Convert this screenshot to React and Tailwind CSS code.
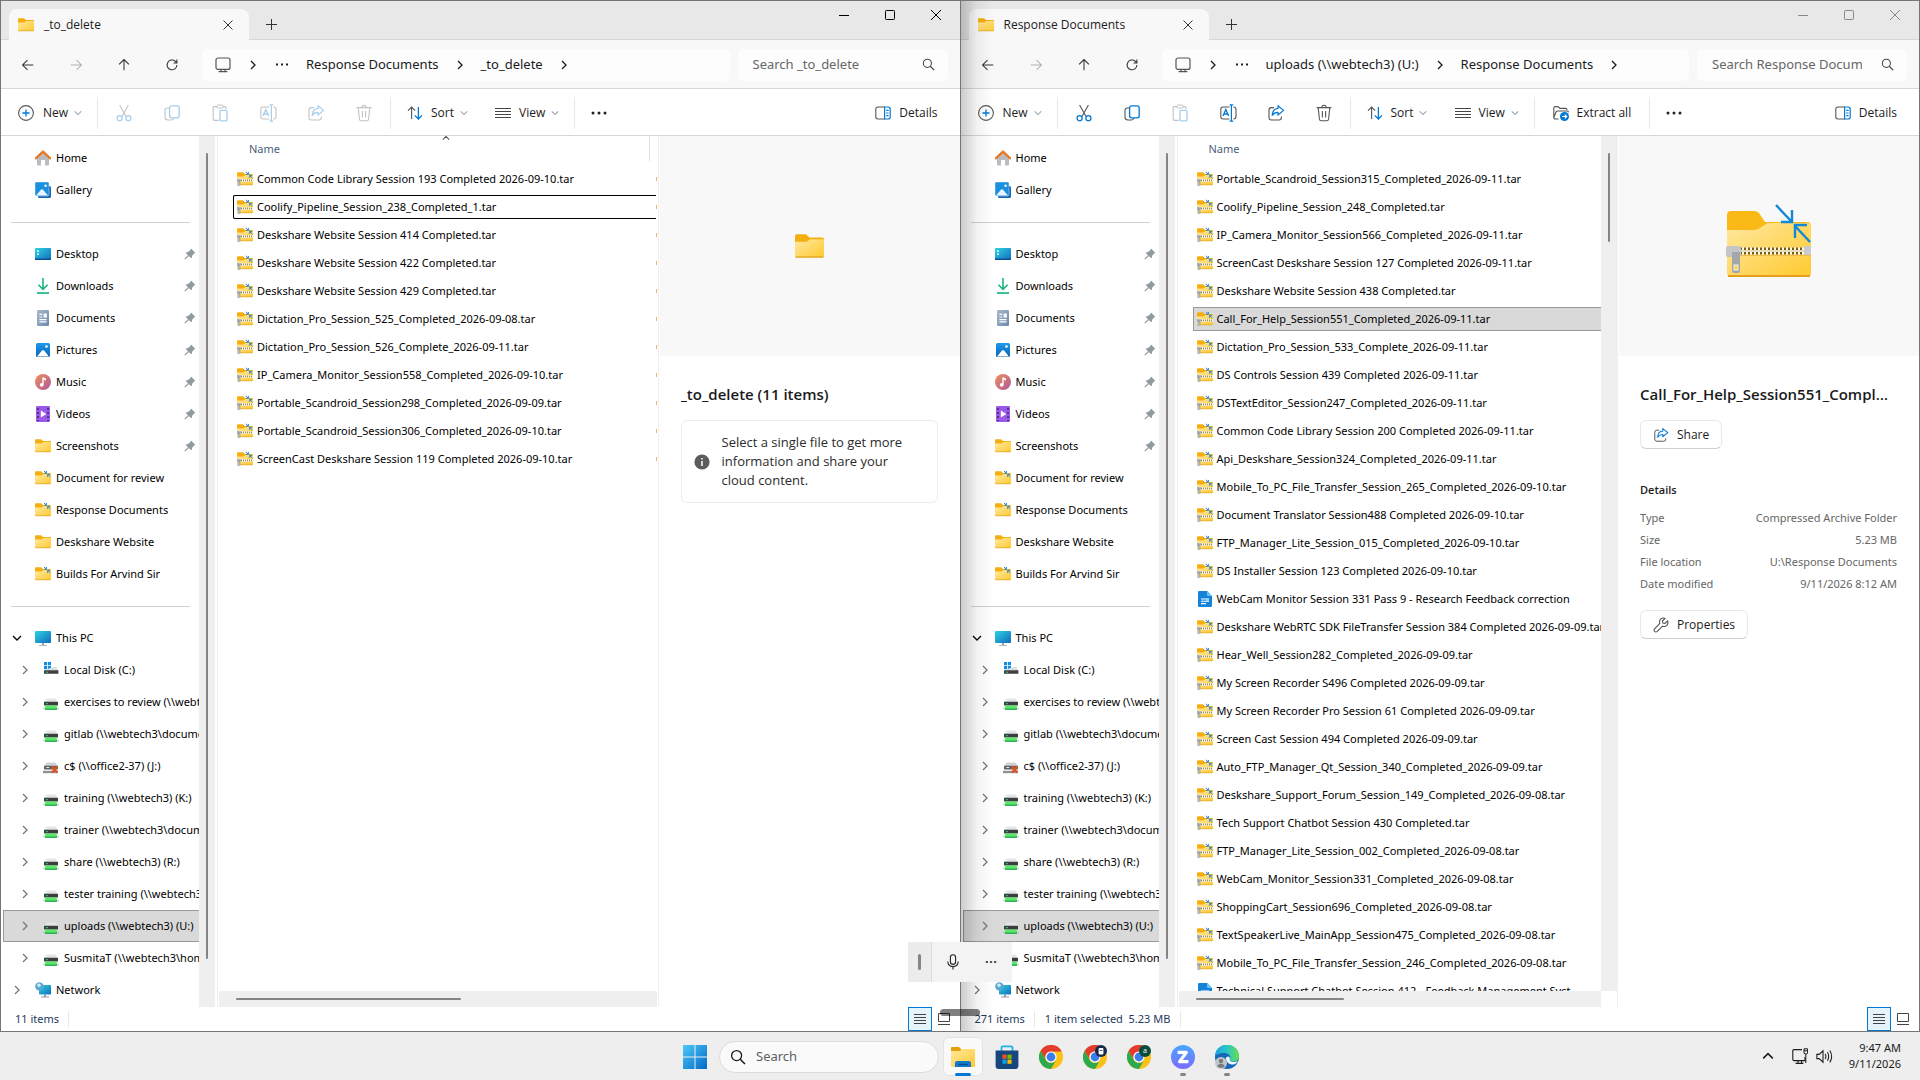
import { useState } from 'react';

const leftFiles = [
  'Common Code Library Session 193 Completed 2026-09-10.tar',
  'Coolify_Pipeline_Session_238_Completed_1.tar',
  'Deskshare Website Session 414 Completed.tar',
  'Deskshare Website Session 422 Completed.tar',
  'Deskshare Website Session 429 Completed.tar',
  'Dictation_Pro_Session_525_Completed_2026-09-08.tar',
  'Dictation_Pro_Session_526_Complete_2026-09-11.tar',
  'IP_Camera_Monitor_Session558_Completed_2026-09-10.tar',
  'Portable_Scandroid_Session298_Completed_2026-09-09.tar',
  'Portable_Scandroid_Session306_Completed_2026-09-10.tar',
  'ScreenCast Deskshare Session 119 Completed 2026-09-10.tar'
];

const rightFiles = [
  'Portable_Scandroid_Session315_Completed_2026-09-11.tar',
  'Coolify_Pipeline_Session_248_Completed.tar',
  'IP_Camera_Monitor_Session566_Completed_2026-09-11.tar',
  'ScreenCast Deskshare Session 127 Completed 2026-09-11.tar',
  'Deskshare Website Session 438 Completed.tar',
  'Call_For_Help_Session551_Completed_2026-09-11.tar',
  'Dictation_Pro_Session_533_Complete_2026-09-11.tar',
  'DS Controls Session 439 Completed 2026-09-11.tar',
  'DSTextEditor_Session247_Completed_2026-09-11.tar',
  'Common Code Library Session 200 Completed 2026-09-11.tar',
  'Api_Deskshare_Session324_Completed_2026-09-11.tar',
  'Mobile_To_PC_File_Transfer_Session_265_Completed_2026-09-10.tar',
  'Document Translator Session488 Completed 2026-09-10.tar',
  'FTP_Manager_Lite_Session_015_Completed_2026-09-10.tar',
  'DS Installer Session 123 Completed 2026-09-10.tar',
  'WebCam Monitor Session 331 Pass 9 - Research Feedback correction',
  'Deskshare WebRTC SDK FileTransfer Session 384 Completed 2026-09-09.tar',
  'Hear_Well_Session282_Completed_2026-09-09.tar',
  'My Screen Recorder S496 Completed 2026-09-09.tar',
  'My Screen Recorder Pro Session 61 Completed 2026-09-09.tar',
  'Screen Cast Session 494 Completed 2026-09-09.tar',
  'Auto_FTP_Manager_Qt_Session_340_Completed_2026-09-09.tar',
  'Deskshare_Support_Forum_Session_149_Completed_2026-09-08.tar',
  'Tech Support Chatbot Session 430 Completed.tar',
  'FTP_Manager_Lite_Session_002_Completed_2026-09-08.tar',
  'WebCam_Monitor_Session331_Completed_2026-09-08.tar',
  'ShoppingCart_Session696_Completed_2026-09-08.tar',
  'TextSpeakerLive_MainApp_Session475_Completed_2026-09-08.tar',
  'Mobile_To_PC_File_Transfer_Session_246_Completed_2026-09-08.tar',
  'Technical Support Chatbot Session 412 - Feedback Management Syst'
];

const sidebar = [
  { icon: 'home', label: 'Home' },
  { icon: 'gallery', label: 'Gallery' },
  { separator: true },
  { icon: 'desktop', label: 'Desktop', pinned: true },
  { icon: 'downloads', label: 'Downloads', pinned: true },
  { icon: 'documents', label: 'Documents', pinned: true },
  { icon: 'pictures', label: 'Pictures', pinned: true },
  { icon: 'music', label: 'Music', pinned: true },
  { icon: 'videos', label: 'Videos', pinned: true },
  { icon: 'folder', label: 'Screenshots', pinned: true },
  { icon: 'folderSync', label: 'Document for review' },
  { icon: 'folderSync', label: 'Response Documents' },
  { icon: 'folder', label: 'Deskshare Website' },
  { icon: 'folderSync', label: 'Builds For Arvind Sir' },
  { separator: true },
  { icon: 'pc', label: 'This PC', arrow: 'down' },
  { icon: 'disk', label: 'Local Disk (C:)', arrow: 'right', child: true },
  { icon: 'drive', label: 'exercises to review (\\\\webtech3) (E:)', arrow: 'right', child: true },
  { icon: 'drive', label: 'gitlab (\\\\webtech3\\documents) (G:)', arrow: 'right', child: true },
  { icon: 'driveOff', label: 'c$ (\\\\office2-37) (J:)', arrow: 'right', child: true },
  { icon: 'drive', label: 'training (\\\\webtech3) (K:)', arrow: 'right', child: true },
  { icon: 'drive', label: 'trainer (\\\\webtech3\\documents) (L:)', arrow: 'right', child: true },
  { icon: 'drive', label: 'share (\\\\webtech3) (R:)', arrow: 'right', child: true },
  { icon: 'drive', label: 'tester training (\\\\webtech3) (T:)', arrow: 'right', child: true },
  { icon: 'drive', label: 'uploads (\\\\webtech3) (U:)', arrow: 'right', child: true, selected: true },
  { icon: 'drive', label: 'SusmitaT (\\\\webtech3\\home) (Z:)', arrow: 'right', child: true },
  { icon: 'network', label: 'Network', arrow: 'right' }
];

const Svg = ({ size = 16, box = 16, className = '', children }) => (
  <svg
    width={size}
    height={size}
    viewBox={`0 0 ${box} ${box}`}
    fill="none"
    className={`shrink-0 ${className}`}
    aria-hidden="true"
  >
    {children}
  </svg>
);

const Gradients = () => (
  <defs>
    <linearGradient id="gold" x1="0" y1="0" x2="1" y2="1">
      <stop offset="0" stopColor="#ffe8a0" />
      <stop offset="1" stopColor="#ffc92e" />
    </linearGradient>
    <linearGradient id="sea" x1="0" y1="0" x2="1" y2="1">
      <stop offset="0" stopColor="#2fd3e0" />
      <stop offset="1" stopColor="#0f6cc0" />
    </linearGradient>
    <linearGradient id="sky" x1="0" y1="0" x2="0" y2="1">
      <stop offset="0" stopColor="#1f9ae8" />
      <stop offset="1" stopColor="#0a62b8" />
    </linearGradient>
    <linearGradient id="peach" x1="0" y1="0" x2="1" y2="1">
      <stop offset="0" stopColor="#f0905a" />
      <stop offset="1" stopColor="#b0589c" />
    </linearGradient>
    <linearGradient id="steel" x1="0" y1="0" x2="1" y2="1">
      <stop offset="0" stopColor="#a9bacd" />
      <stop offset="1" stopColor="#6b87a8" />
    </linearGradient>
  </defs>
);

const FolderShape = () => (
  <>
    <path d="M0 2.2Q0 1.2 1 1.2H6L8 3H15Q16 3 16 4V8H0Z" fill="#f5ae10" />
    <path d="M0 5.4H6.4L8.4 4H15.2Q16 4 16 4.8V13.3Q16 14.1 15.2 14.1H.8Q0 14.1 0 13.3Z" fill="url(#gold)" />
    <path d="M.3 13.8H15.7" stroke="#e0a21c" strokeWidth="0.7" />
  </>
);

const SyncMark = () => (
  <path
    d="M8.8 .8 11.2 3M9 3.3H11.4V1M15.4 7 12.8 4.6M12.6 6.8V4.4H15"
    stroke="#2789d0"
    strokeWidth="1"
  />
);

const FolderIcon = ({ size = 16 }) => (
  <Svg size={size}>
    <Gradients />
    <FolderShape />
  </Svg>
);

const ZipIcon = () => (
  <Svg>
    <Gradients />
    <FolderShape />
    <path d="M1 9.4H16" stroke="#fff6d8" strokeWidth="2.6" />
    <path d="M4 9.4H16" stroke="#8f8875" strokeWidth="1.6" strokeDasharray="1 1" />
    <path d="M0 8.2H3.8V10.4H3.4V14.8H.9V10.4H0Z" fill="#a2a5ab" />
    <path d="M1.7 12.4H2.5V13.6H1.7Z" fill="#fff" />
    <SyncMark />
  </Svg>
);

const DocIcon = () => (
  <Svg>
    <path d="M1 1.2Q1 0 2.2 0H10L15 5V14.8Q15 16 13.8 16H2.2Q1 16 1 14.8Z" fill="#1583d8" />
    <path d="M10 0 15 5H11.2Q10 5 10 3.8Z" fill="#69c4f5" />
    <path d="M4 8H12M4 10.3H12M4 12.6H9" stroke="#fff" strokeWidth="1.1" />
    <path d="M9 7.4H12V10H9Z" fill="#8fd4fa" />
  </Svg>
);

const sideIcons = {
  home: (
    <>
      <path d="M2 7.5 8 2 14 7.5V14.6Q14 15.4 13.2 15.4H10V10H6V15.4H2.8Q2 15.4 2 14.6Z" fill="#b9bcc0" />
      <path d="M.8 8.4 8 1.6 15.2 8.4" stroke="#e87722" strokeWidth="2.2" strokeLinecap="round" strokeLinejoin="round" />
    </>
  ),
  gallery: (
    <>
      <path d="M3 4H14.5Q16 4 16 5.5V14.5Q16 16 14.5 16H4Q3 16 3 15Z" fill="#1668b5" />
      <rect x="0" y="0" width="14" height="14" rx="1.4" fill="#1b90e0" stroke="#fff" strokeWidth="0.4" />
      <path d="M1 13.6 6.2 7.6Q7 6.8 7.8 7.6L13 13.6Z" fill="#eaf6ff" />
      <circle cx="10.6" cy="3.8" r="1.2" fill="#fff" />
    </>
  ),
  desktop: (
    <>
      <rect x="0" y="2" width="16" height="12" rx="1" fill="url(#sea)" />
      <path d="M2 4.4H4V6H2ZM2 7.4H4V9H2Z" fill="#e8fbff" />
      <path d="M0 12.6H16V13.4Q16 14 15.4 14H.6Q0 14 0 13.4Z" fill="#0d4f94" />
    </>
  ),
  downloads: (
    <>
      <path d="M8 0V11M3.4 6.8 8 11.4 12.6 6.8" stroke="#1fb185" strokeWidth="1.6" />
      <path d="M2 15H14" stroke="#28b98e" strokeWidth="1.8" />
    </>
  ),
  documents: (
    <>
      <rect x="2" y="0" width="12" height="16" rx="1.2" fill="url(#steel)" />
      <path d="M4.4 4.4H7.4M4.4 7H7.4M4.4 9.6H11.6M4.4 11.8H11.6" stroke="#fff" strokeWidth="1.2" />
      <path d="M8.6 3.6H11.8V7.6H8.6Z" fill="#fff" />
    </>
  ),
  pictures: (
    <>
      <rect x="1" y="1" width="14" height="14" rx="1.5" fill="url(#sky)" />
      <path d="M2 14.5 7 8.6Q8 7.6 9 8.6L14 14.5Z" fill="#fff" />
      <circle cx="11.5" cy="4.5" r="1.3" fill="#fff" />
    </>
  ),
  music: (
    <>
      <circle cx="8" cy="8" r="8" fill="url(#peach)" />
      <path d="M8 3.4V10.6" stroke="#fff" strokeWidth="1.4" />
      <path d="M8 3.2 11 4.6V6.4L8 5.4Z" fill="#fff" />
      <circle cx="6.7" cy="10.8" r="1.9" fill="#fff" />
    </>
  ),
  videos: (
    <>
      <rect x="1" y="0" width="14" height="16" rx="1.2" fill="#9b57e6" />
      <path d="M3 2V15M13 2V15" stroke="#4d2285" strokeWidth="1.6" strokeDasharray="2 2" />
      <path d="M5.8 4.6 11.4 8 5.8 11.4Z" fill="#fff" />
    </>
  ),
  folder: <FolderShape />,
  folderSync: (
    <>
      <FolderShape />
      <SyncMark />
    </>
  ),
  pc: (
    <>
      <rect x="0" y="1" width="16" height="12" rx="1" fill="url(#sea)" />
      <path d="M7 13H9V15H12V15.8H4V15H7Z" fill="#9aa7b2" />
    </>
  ),
  disk: (
    <>
      <path d="M1 0H4V3.2H1ZM4.8 0H8V3.2H4.8ZM1 4H4V7.2H1ZM4.8 4H8V7.2H4.8Z" fill="#0f8be0" />
      <path d="M9 5H13.6L15.4 8.4H2Z" fill="#dcdee0" />
      <rect x="1" y="8.2" width="14.4" height="3.6" rx="0.6" fill="#3c4043" />
      <rect x="3.4" y="9.6" width="1.4" height="1.2" fill="#4be07a" />
    </>
  ),
  drive: (
    <>
      <path d="M4 4.4H12L15 8H1Z" fill="#e2e4e6" />
      <rect x="1" y="7.8" width="14" height="3.6" rx="0.6" fill="#3a3d40" />
      <rect x="3.2" y="9" width="1.4" height="1.2" fill="#4be07a" />
      <path d="M0 14.6H16" stroke="#a6b0a8" strokeWidth="0.8" />
      <rect x="2" y="11.6" width="12" height="3.8" fill="#55ea68" />
      <rect x="2" y="14.6" width="12" height="1.2" fill="#1f9c46" />
    </>
  ),
  driveOff: (
    <>
      <path d="M4 4.4H12L15 8H1Z" fill="#cfd1d3" />
      <rect x="1" y="7.8" width="14" height="3.6" rx="0.6" fill="#606468" />
      <rect x="3.2" y="9" width="3" height="1" fill="#e6e6e6" />
      <path d="M0 14H15" stroke="#8f9396" strokeWidth="2.4" />
      <path d="M9 8.6 14.2 14.4M14.2 8.6 9 14.4" stroke="#e0531f" strokeWidth="2.2" />
    </>
  ),
  network: (
    <>
      <rect x="4" y="3" width="12" height="9.6" rx="0.8" fill="url(#sea)" />
      <path d="M9 12.6H11V14.6H14V15.6H6V14.6H9Z" fill="#8d9aa5" />
      <circle cx="4.4" cy="4.4" r="4.2" fill="#5aa6d2" />
      <path d="M2 2.4Q4 .8 5.6 2.4T3 5.2Z" fill="#cde9f7" />
    </>
  )
};

const Chevron = ({ dir = 'right', className = '', size = 8 }) => {
  const paths = {
    right: 'M3 1 7 5 3 9',
    down: 'M1 3 5 7 9 3',
    up: 'M1 7 5 3 9 7'
  };
  return (
    <Svg size={size} box={10} className={className}>
      <path d={paths[dir]} stroke="currentColor" strokeWidth="1.3" />
    </Svg>
  );
};

const Dots = () => (
  <Svg>
    <circle cx="2" cy="8" r="1.5" fill="#222" />
    <circle cx="8" cy="8" r="1.5" fill="#222" />
    <circle cx="14" cy="8" r="1.5" fill="#222" />
  </Svg>
);

const SearchIcon = ({ size = 13 }) => (
  <Svg size={size}>
    <circle cx="6.6" cy="6.6" r="5" stroke="currentColor" strokeWidth="1.3" />
    <path d="M10.2 10.2 15 15" stroke="currentColor" strokeWidth="1.5" />
  </Svg>
);

const toolIcons = {
  Cut: (
    <>
      <path d="M4.6 1 11 12.4M13.4 1 7 12.4" stroke="#555" strokeWidth="1.1" />
      <circle cx="4.6" cy="14.2" r="2.5" stroke="#0078d4" strokeWidth="1.3" />
      <circle cx="13.4" cy="14.2" r="2.5" stroke="#0078d4" strokeWidth="1.3" />
    </>
  ),
  Copy: (
    <>
      <path d="M6 4H4.4Q2 4 2 6.4V13Q2 16 5 16H8.6Q10.6 16 10.8 14" stroke="#555" strokeWidth="1.1" />
      <rect x="6.6" y="1.8" width="9.6" height="12" rx="2" stroke="#0078d4" strokeWidth="1.3" />
    </>
  ),
  Paste: (
    <>
      <path d="M6 2.6H3.4Q2.2 2.6 2.2 3.8V15Q2.2 16.4 3.4 16.4H8M12 2.6H14Q15 2.6 15 4V5" stroke="#555" strokeWidth="1.1" />
      <rect x="6" y="1" width="6" height="3" rx="1.2" stroke="#555" strokeWidth="1" />
      <rect x="9" y="6.4" width="7" height="10.4" rx="1.2" stroke="#0078d4" strokeWidth="1.3" />
    </>
  ),
  Rename: (
    <>
      <path d="M10.4 3H4Q1.8 3 1.8 5.2V12.8Q1.8 15 4 15H10.4M14.4 3Q17 3 17 5.4V12.6Q17 15 14.4 15" stroke="#555" strokeWidth="1.1" />
      <path d="M12.4 1.2V16.8M10.6 .8H14.2M10.6 17.2H14.2" stroke="#0078d4" strokeWidth="1.2" />
      <path d="M4 12 6.8 5.4 9.6 12M5 10H8.6" stroke="#0078d4" strokeWidth="1.3" />
    </>
  ),
  Share: (
    <>
      <path d="M7 3.6H4.4Q2 3.6 2 6V13.6Q2 16 4.4 16H12Q14.4 16 14.4 13.6V12.6" stroke="#555" strokeWidth="1.1" />
      <path d="M11 1.8 16.6 6.4 11 11V8.4Q7.4 8.2 5.2 11.4 5.6 4.8 11 4.4Z" stroke="#0078d4" strokeWidth="1.2" strokeLinejoin="round" />
    </>
  ),
  Delete: (
    <path
      d="M1.6 3.6H16.4M6.8 3.4Q6.8 1.2 9 1.2T11.2 3.4M3.2 3.8 4.4 15Q4.6 16.8 6.2 16.8H11.8Q13.4 16.8 13.6 15L14.8 3.8M7.4 7V13.4M10.6 7V13.4"
      stroke="#555"
      strokeWidth="1.1"
    />
  )
};

const ShareIcon = () => <Svg box={18}>{toolIcons.Share}</Svg>;

const Divider = () => <span className="h-8 w-px shrink-0 bg-[#e8e8e8]" />;

const DropLabel = ({ icon, label, className }) => (
  <button className={`flex h-8 items-center text-[#1b1b1b] ${className}`}>
    {icon}
    <span className="ml-2">{label}</span>
    <Chevron dir="down" className="ml-1.5 text-gray-400" />
  </button>
);

const Toolbar = ({ enabled, extract }) => (
  <div className="flex h-[47px] shrink-0 items-center border-b border-[#d6d6d6] bg-white pt-0.5 font-['Open_Sans',sans-serif] text-[12px]">
    <DropLabel
      className="ml-4 w-20"
      label="New"
      icon={
        <Svg size={18} box={18}>
          <circle cx="9" cy="9" r="7.4" stroke="#555" strokeWidth="1.1" />
          <path d="M9 5.4V12.6M5.4 9H12.6" stroke="#0078d4" strokeWidth="1.3" />
        </Svg>
      }
    />
    <Divider />
    <div className="ml-0.5 flex">
      {Object.keys(toolIcons).map((name) => (
        <button
          key={name}
          aria-label={name}
          disabled={!enabled.includes(name)}
          className="flex h-8 w-12 items-center justify-center disabled:opacity-35"
        >
          <Svg size={18} box={18}>{toolIcons[name]}</Svg>
        </button>
      ))}
    </div>
    <span className="w-0.5" />
    <Divider />
    <DropLabel
      className="ml-4 w-[88px]"
      label="Sort"
      icon={
        <Svg>
          <path d="M4.6 14V2M1 5.6 4.6 2 8.2 5.6" stroke="#555" strokeWidth="1.1" />
          <path d="M11.4 2V14M7.8 10.4 11.4 14 15 10.4" stroke="#0078d4" strokeWidth="1.3" />
        </Svg>
      }
    />
    <DropLabel
      className="w-[79px]"
      label="View"
      icon={
        <Svg>
          <path d="M0 3.5H16M0 6.5H16M0 9.5H16M0 12.5H16" stroke="#444" strokeWidth="1" />
        </Svg>
      }
    />
    <Divider />
    {extract && (
      <>
        <button className="mx-4.5 flex h-8 items-center gap-2 text-[#1b1b1b]">
          <Svg>
            <path d="M5.6 14H2.4Q.8 14 .8 12.4V3Q.8 1.6 2.4 1.6H5L7 3.4H12.6Q14 3.4 14 5M.8 12.6 3 7Q3.4 6 4.6 6H14.2Q15.6 6 15.2 7.4" stroke="#555" strokeWidth="1.1" />
            <circle cx="11.5" cy="11.5" r="4.5" fill="#0078d4" />
            <path d="M9 11.5H13.6M11.8 9.6 13.8 11.5 11.8 13.4" stroke="#fff" strokeWidth="1.1" />
          </Svg>
          Extract all
        </button>
        <Divider />
      </>
    )}
    <button aria-label="See more" className="ml-4 flex h-8 items-center">
      <Dots />
    </button>
    <button className="mr-[22px] ml-auto flex h-8 items-center gap-2 text-[#1b1b1b]">
      <Svg>
        <path d="M9.6 2H3Q.8 2 .8 4.2V11.8Q.8 14 3 14H9.6" stroke="#555" strokeWidth="1.1" />
        <path d="M9.6 2H13Q15.2 2 15.2 4.2V11.8Q15.2 14 13 14H9.6ZM11.2 5.4H13.6M11.2 8H13.6M11.2 10.6H13.6" stroke="#0078d4" strokeWidth="1.2" />
      </Svg>
      Details
    </button>
  </div>
);

const TitleBar = ({ title, active }) => (
  <div className="flex h-[39px] shrink-0 border-b border-[#d6d6d6] bg-[#e8e8e8]">
    <div className="mt-2 -mb-px ml-2 flex w-60 items-center rounded-t-lg bg-[#f8f8f8] pr-3.5 pl-[9px]">
      <FolderIcon />
      <span className="ml-2.5 font-['Open_Sans',sans-serif] text-[12px] font-medium text-[#1b1b1b]">{title}</span>
      <button aria-label="Close tab" className="ml-auto">
        <Svg size={14} box={14}>
          <path d="M2.5 2.5 11.5 11.5M11.5 2.5 2.5 11.5" stroke="#333" strokeWidth="1" />
        </Svg>
      </button>
    </div>
    <button aria-label="New tab" className="mt-2 flex w-11 items-center justify-center">
      <Svg size={12} box={12}>
        <path d="M6.5 1V12M1 6.5H12" stroke="#333" strokeWidth="1" />
      </Svg>
    </button>
    <div className={`mr-px ml-auto flex h-7 ${active ? 'text-black' : 'text-[#888]'}`}>
      <button aria-label="Minimize" className="flex w-[46px] items-center justify-center">
        <Svg size={10} box={10}>
          <path d="M0 5.5H10" stroke="currentColor" />
        </Svg>
      </button>
      <button aria-label="Maximize" className="flex w-[46px] items-center justify-center">
        <Svg size={10} box={10}>
          <rect x="0.5" y="0.5" width="9" height="9" rx="0.8" stroke="currentColor" />
        </Svg>
      </button>
      <button aria-label="Close" className="flex w-[46px] items-center justify-center">
        <Svg size={10} box={10}>
          <path d="M0 0 10 10M10 0 0 10" stroke="currentColor" />
        </Svg>
      </button>
    </div>
  </div>
);

const navIcons = [
  { name: 'Back', d: 'M14 8H2M7.4 2.4 1.8 8 7.4 13.6' },
  { name: 'Forward', d: 'M2 8H14M8.6 2.4 14.2 8 8.6 13.6', disabled: true },
  { name: 'Up', d: 'M8 14V2M2.4 7.4 8 1.8 13.6 7.4' },
  { name: 'Refresh', d: 'M13.6 8A5.6 5.6 0 1 1 11.6 3.6L13.4 5.4M13.6 1.8V5.6H9.8' }
];

const AddressBar = ({ crumbs, search, id }) => (
  <div className="flex h-[49px] shrink-0 items-center border-b border-[#d6d6d6] bg-[#f8f8f8] pt-px pr-3 pl-[3px] text-[13px]">
    {navIcons.map(({ name, d, disabled }) => (
      <button
        key={name}
        aria-label={name}
        disabled={disabled}
        className="flex h-8 w-12 items-center justify-center text-[#333] disabled:text-[#b0b0b0]"
      >
        <Svg size={14}>
          <path d={d} stroke="currentColor" strokeWidth="1.2" />
        </Svg>
      </button>
    ))}
    <div className="ml-1.5 flex h-8 min-w-0 flex-1 items-center rounded-md bg-[#fdfdfd] pl-[13px] text-[#1b1b1b]">
      <Svg>
        <rect x="1" y="1" width="14" height="11.4" rx="2" stroke="#555" strokeWidth="1.2" />
        <path d="M3.6 14.6H12.4M6 12.4V14.6M10 12.4V14.6" stroke="#555" strokeWidth="1.2" />
      </Svg>
      <Chevron size={10} className="mr-4 ml-[17px]" />
      <Svg className="mr-4">
        <path d="M2 7.5H4M7 7.5H9M12 7.5H14" stroke="#222" strokeWidth="1.8" />
      </Svg>
      {crumbs.map((crumb) => (
        <span key={crumb} className="flex items-center whitespace-nowrap">
          <a href="#">{crumb}</a>
          <Chevron size={10} className="mx-4" />
        </span>
      ))}
    </div>
    <div className="ml-2 flex h-8 w-[210px] items-center rounded-md bg-[#fdfdfd] pr-[13px] pl-[15px] text-[#444]">
      <input
        id={id}
        type="text"
        aria-label={search}
        placeholder={search}
        className="mr-auto w-[150px] outline-none placeholder:text-[#666]"
      />
      <SearchIcon />
    </div>
  </div>
);

const Sidebar = () => (
  <nav className="flex min-h-0 shrink-0">
    <ul className="w-[198px] overflow-hidden pt-1.5 text-[11px] text-black">
      {sidebar.map((item, i) =>
        item.separator ? (
          <li key={i} className="flex h-8 items-center pr-[9px] pl-2.5">
            <hr className="w-full border-[#d0d0d0]" />
          </li>
        ) : (
          <li key={i} className="pl-0.5">
            <button
              className={`flex h-8 w-full items-center border border-r-0 ${item.child ? 'pl-2' : ''} ${
                item.selected ? 'border-[#999] bg-[#d9d9d9]' : 'border-transparent'
              }`}
            >
              <span className="flex w-[26px] shrink-0 justify-center">
                {item.arrow && (
                  <Chevron
                    dir={item.arrow}
                    size={10}
                    className={item.arrow === 'down' ? 'text-black' : 'text-[#777]'}
                  />
                )}
              </span>
              <span className="ml-[5px] shrink-0">
                <Svg>
                  <Gradients />
                  {sideIcons[item.icon]}
                </Svg>
              </span>
              <span className="ml-[5px] whitespace-nowrap">{item.label}</span>
              {item.pinned && (
                <Svg size={12} box={12} className="mr-[3px] ml-auto">
                  <path d="M7 .6 11.4 5 10 5.6 8 8 7.8 10 6.2 9.6 2.4 5.8 2 4.2 4 4 6.4 2Z" fill="#8f9ba3" />
                  <path d="M.8 11.2 4.4 7.6" stroke="#8f9ba3" strokeWidth="1.2" />
                </Svg>
              )}
            </button>
          </li>
        )
      )}
    </ul>
    <div className="flex w-4 justify-center bg-[#efefef] pt-[17px] pb-12">
      <span className="w-0.5 rounded-full bg-[#858585]" />
    </div>
  </nav>
);

const FileTable = ({ files, picked, onPick, pickedStyle, nextColumn, sorted }) => (
  <div className="relative min-w-0 flex-1 overflow-hidden">
    {sorted && <Chevron dir="up" className="absolute -top-0.5 left-1/2 ml-1 text-[#555]" />}
    <table className="w-full table-fixed border-collapse text-[11px]">
      <thead>
        <tr className="h-[29px]">
          <th className="p-0 text-left align-top font-normal">
            <div className={`h-[25px] border-[#e2e2e2] pt-[5px] pl-[30px] text-[#4c607a] ${nextColumn ? 'mr-1.5 border-r' : ''}`}>
              Name
            </div>
          </th>
          {nextColumn && <th className="w-px p-0" aria-label="Status" />}
        </tr>
      </thead>
      <tbody>
        {files.map((file, i) => (
          <tr key={file} className="h-7" onClick={() => onPick(i)}>
            <td className="p-0 pl-3.5">
              <div
                className={`flex h-6 items-center gap-1 border border-r-0 pl-[3px] whitespace-nowrap text-black ${
                  i === picked ? pickedStyle : 'border-transparent'
                }`}
              >
                {file.endsWith('.tar') ? <ZipIcon /> : <DocIcon />}
                <span>{file}</span>
              </div>
            </td>
            {nextColumn && (
              <td className="p-0">
                <div className="h-1 w-px bg-[#e8b96a]" />
              </td>
            )}
          </tr>
        ))}
      </tbody>
    </table>
  </div>
);

const HScroll = ({ wide }) => (
  <div className="flex h-4 shrink-0 items-center bg-[#efefef] pl-[17px]">
    <span className={`h-0.5 rounded-full bg-[#858585] ${wide ? 'w-[225px]' : 'w-[148px]'}`} />
  </div>
);

const StatusBar = ({ texts }) => (
  <div className="flex h-6 shrink-0 items-center bg-white text-[11px] text-[#1e395b]">
    {texts.map((text, i) => (
      <span
        key={text}
        className={`border-r border-[#e8e8e8] whitespace-pre ${i === 0 ? 'pr-[9px] pl-3.5' : 'px-2.5'}`}
      >
        {text}
      </span>
    ))}
    <div className="ml-auto flex h-full items-center">
      <button
        aria-label="Details view"
        className="flex h-6 w-6 items-center justify-center border border-[#0078d4] bg-[#e5f3fb]"
      >
        <Svg size={12} box={12}>
          <path d="M0 1.5H12M0 4.5H12M0 7.5H12M0 10.5H12" stroke="#444" />
        </Svg>
      </button>
      <button aria-label="Large icons" className="mr-2.5 ml-1.5">
        <Svg size={12} box={12}>
          <path d="M.5 .5H11.5V8.5H.5ZM0 11.5H12" stroke="#444" />
        </Svg>
      </button>
    </div>
  </div>
);

const BigZipIcon = () => (
  <svg width="86" height="76" viewBox="0 0 86 76" fill="none" className="mb-2" aria-hidden="true">
    <Gradients />
    <path d="M1 11Q1 7 5 7H28Q31 7 33 9L39 18H81Q85 18 85 22V40H1Z" fill="#fbb917" />
    <path d="M1 26H28Q31 26 34 24L40 20Q41 19 43 19H81Q85 19 85 23V69Q85 73 81 73H5Q1 73 1 69Z" fill="url(#gold)" />
    <path d="M2 72H84" stroke="#e59f1b" strokeWidth="2" />
    <path d="M1 51H85V52H1Z" fill="#f0bd45" />
    <path d="M8 47H80" stroke="#fff8e0" strokeWidth="7" />
    <path d="M14 47H80" stroke="#7a5a12" strokeWidth="7" strokeDasharray="2 2" />
    <path d="M14 47H80" stroke="#e8dcc0" strokeWidth="2" />
    <rect x="78" y="42" width="7" height="9" rx="1" fill="#c9cbce" />
    <path d="M0 44Q0 42 2 42H12Q15 42 15 45V51Q15 53 13 53H2Q0 53 0 51Z" fill="#c3c5c8" />
    <path d="M6 48H14V67Q14 69 12 69H8Q6 69 6 67Z" fill="#a3a6aa" />
    <rect x="8" y="61" width="4" height="5" fill="#ffd24a" stroke="#eee" />
    <path d="M50 1 65 17M55 18H66V6" stroke="#1288d8" strokeWidth="2.4" />
    <path d="M84 38 69 22M69 34V21H81" stroke="#1288d8" strokeWidth="2.4" />
  </svg>
);

const details = [
  ['Type', 'Compressed Archive Folder'],
  ['Size', '5.23 MB'],
  ['File location', 'U:\\Response Documents'],
  ['Date modified', '9/11/2026 8:12 AM']
];

const DetailsPane = ({ title, preview, children }) => (
  <aside className="w-[302px] shrink-0 border-l border-[#f0f0f0] bg-white pl-px">
    <div className="flex h-[220px] items-center justify-center bg-[#f8f8f8]">{preview}</div>
    <div className="pt-[27px] pr-[22px] pl-[21px] font-['Open_Sans',sans-serif]">
      <h2 className="mr-2 truncate text-[15px] leading-[22px] font-semibold text-[#1b1b1b]">{title}</h2>
      {children}
    </div>
  </aside>
);

const FolderInfo = () => (
  <div className="mt-[15px] flex items-center rounded-md border border-[#ececec] py-3 pr-4 pl-3">
    <Svg>
      <circle cx="8" cy="8" r="7.6" fill="#5c5c5c" />
      <path d="M8 7V12M8 4V5.6" stroke="#fff" strokeWidth="1.5" />
    </Svg>
    <p className="ml-3 text-[13px] leading-[19px] text-[#2b2b2b]">
      Select a single file to get more information and share your cloud content.
    </p>
  </div>
);

const paneButton =
  'flex h-[29px] items-center gap-2 rounded-md border border-[#e8e8e8] border-b-[#d0d0d0] bg-white px-3 text-[12px] text-[#1b1b1b]';

const FileInfo = () => (
  <>
    <button className={`mt-[15px] ${paneButton}`}>
      <ShareIcon />
      Share
    </button>
    <h3 className="mt-8 text-[11px] leading-[18px] font-semibold text-[#1b1b1b]">Details</h3>
    <dl className="mt-2 font-['Noto_Sans',sans-serif] text-[11px] leading-[22px] text-[#666]">
      {details.map(([name, value]) => (
        <div key={name} className="flex justify-between">
          <dt>{name}</dt>
          <dd>{value}</dd>
        </div>
      ))}
    </dl>
    <button className={`mt-[15px] ${paneButton}`}>
      <Svg>
        <path
          d="M14.6 4 12 6.4 9.8 6 9.4 4 12 1.4Q9.6 .4 7.6 2.2 6 4 6.8 6.4L1.4 12Q.6 13.2 1.6 14.4 2.8 15.4 4 14.6L9.6 9.2Q12 10 13.8 8.4 15.6 6.4 14.6 4Z"
          stroke="#555"
          strokeWidth="1.1"
        />
      </Svg>
      Properties
    </button>
  </>
);

const LeftWindow = () => {
  const [picked, setPicked] = useState(1);
  return (
    <section className="flex min-w-0 flex-1 flex-col border-y border-l border-[#767676] bg-white">
      <TitleBar title="_to_delete" active />
      <AddressBar id="search-left" crumbs={['Response Documents', '_to_delete']} search="Search _to_delete" />
      <Toolbar enabled={[]} />
      <div className="flex min-h-0 flex-1">
        <Sidebar />
        <main className="ml-0.5 flex min-w-0 flex-1 flex-col border-l border-[#f0f0f0] px-px">
          <FileTable
            files={leftFiles}
            picked={picked}
            onPick={setPicked}
            pickedStyle="border-black rounded-l-xs"
            nextColumn
            sorted
          />
          <HScroll wide />
        </main>
        <DetailsPane title="_to_delete (11 items)" preview={<FolderIcon size={29} />}>
          <FolderInfo />
        </DetailsPane>
      </div>
      <StatusBar texts={['11 items']} />
    </section>
  );
};

const RightWindow = () => {
  const [picked, setPicked] = useState(5);
  return (
    <section className="relative flex min-w-0 flex-1 flex-col border border-[#767676] bg-white">
      <TitleBar title="Response Documents" />
      <AddressBar
        id="search-right"
        crumbs={['uploads (\\\\webtech3) (U:)', 'Response Documents']}
        search="Search Response Documents"
      />
      <Toolbar enabled={['Cut', 'Copy', 'Rename', 'Share', 'Delete']} extract />
      <div className="flex min-h-0 flex-1">
        <Sidebar />
        <main className="ml-0.5 flex min-w-0 flex-1 flex-col border-l border-[#f0f0f0] pl-px">
          <div className="flex min-h-0 flex-1">
            <FileTable
              files={rightFiles}
              picked={picked}
              onPick={setPicked}
              pickedStyle="border-[#999] bg-[#d9d9d9]"
            />
            <div className="flex w-4 justify-center bg-[#efefef] pt-[17px]">
              <span className="h-[89px] w-0.5 rounded-full bg-[#858585]" />
            </div>
          </div>
          <div className="pr-4">
            <HScroll />
          </div>
        </main>
        <DetailsPane title="Call_For_Help_Session551_Completed_2026-09-11.tar" preview={<BigZipIcon />}>
          <FileInfo />
        </DetailsPane>
      </div>
      <StatusBar texts={['271 items', '1 item selected  5.23 MB']} />
      {/* shadow cast by the focused window */}
      <div className="pointer-events-none absolute inset-y-0 left-0 w-8 bg-linear-to-r from-black/20 via-black/5 to-transparent" />
    </section>
  );
};

const ChromeIcon = ({ children }) => (
  <Svg size={24} box={24}>
    <circle cx="12" cy="12" r="12" fill="#fbc116" />
    <path d="M12 6.5H22.7A12 12 0 0 0 1.6 6L6.8 15A6 6 0 0 1 12 6.5Z" fill="#e33b2e" />
    <path d="M1.6 6A12 12 0 0 0 12 24L17.2 15A6 6 0 0 1 6.8 15Z" fill="#2da94f" />
    <circle cx="12" cy="12" r="5.6" fill="#fff" />
    <circle cx="12" cy="12" r="4.4" fill="#3b7ded" />
    {children}
  </Svg>
);

const taskIcons = [
  {
    name: 'File Explorer',
    active: true,
    icon: (
      <Svg size={24} box={24}>
        <Gradients />
        <path d="M0 3Q0 2 1 2H8L10 4V8H0Z" fill="#e3a008" />
        <path d="M0 6H9L11 4H23Q24 4 24 5V21Q24 22 23 22H1Q0 22 0 21Z" fill="url(#gold)" />
        <path d="M4 22V18Q4 16 6 16H18Q20 16 20 18V22Z" fill="#1178cc" />
        <path d="M7 19.5H17" stroke="#0b4f92" strokeWidth="1.4" />
      </Svg>
    )
  },
  {
    name: 'Microsoft Store',
    icon: (
      <Svg size={24} box={24}>
        <path d="M6.5 6V2.6Q6.5 1.4 7.8 1.4H16.2Q17.5 1.4 17.5 2.6V6" stroke="#20b2ee" strokeWidth="1.8" />
        <path d="M.6 5.4H23.4V21Q23.4 24 20.4 24H3.6Q.6 24 .6 21Z" fill="#17457e" />
        <path d="M7.4 9.6H11.6V13.8H7.4Z" fill="#f25022" />
        <path d="M12.4 9.6H16.6V13.8H12.4Z" fill="#7fba00" />
        <path d="M7.4 14.6H11.6V18.8H7.4Z" fill="#00a4ef" />
        <path d="M12.4 14.6H16.6V18.8H12.4Z" fill="#ffb900" />
      </Svg>
    )
  },
  { name: 'Google Chrome', icon: <ChromeIcon /> },
  {
    name: 'Google Chrome, work profile',
    icon: (
      <ChromeIcon>
        <circle cx="18" cy="6" r="6" fill="#17294d" />
        <rect x="15.6" y="3" width="4.8" height="6.4" rx="1" fill="#fff" />
        <path d="M16.6 5.4H19.4" stroke="#17294d" strokeWidth="0.8" />
      </ChromeIcon>
    )
  },
  {
    name: 'Google Chrome, personal profile',
    icon: (
      <ChromeIcon>
        <circle cx="18" cy="6" r="6" fill="#064c3c" />
        <text x="18" y="8.4" fontSize="7" textAnchor="middle" fill="#fff">a</text>
      </ChromeIcon>
    )
  },
  {
    name: 'Zoom',
    running: true,
    icon: (
      <Svg size={24} box={24}>
        <defs>
          <linearGradient id="zoom" x1="0" y1="0" x2="0" y2="1">
            <stop offset="0" stopColor="#4aa5ff" />
            <stop offset="1" stopColor="#7a6cff" />
          </linearGradient>
        </defs>
        <circle cx="12" cy="12" r="12" fill="url(#zoom)" />
        <path d="M6.6 7.4H15.4L8.6 16.6H17.4" stroke="#fff" strokeWidth="3.2" strokeLinejoin="round" />
      </Svg>
    )
  },
  {
    name: 'Microsoft Edge',
    running: true,
    icon: (
      <Svg size={24} box={24}>
        <defs>
          <linearGradient id="edge" x1="0" y1="0" x2="1" y2="0">
            <stop offset="0" stopColor="#1aa3e0" />
            <stop offset="0.5" stopColor="#2cc6c6" />
            <stop offset="1" stopColor="#66e04a" />
          </linearGradient>
        </defs>
        <circle cx="12" cy="12" r="12" fill="#1568b8" />
        <path d="M0 11.4A12 12 0 0 1 24 11.6C24 15 21.4 16.6 18.6 16.6 16.2 16.6 14.6 15.8 15 14.4 16.4 11.6 14 8 9.4 8 5 8 1 9.4 0 11.4Z" fill="url(#edge)" />
        <path d="M11 13.4C11 16.6 14.4 20 18.6 19.4 20.6 19 22 17.6 23 16 18.4 18 14.2 16.6 14.8 14.2 15 13 14.6 12 13.4 11.6 12 11.6 11 12.4 11 13.4Z" fill="#eef8fc" />
        <circle cx="6" cy="18" r="6" fill="#c3c6c9" />
        <circle cx="6" cy="16" r="2.2" fill="#77797c" />
        <path d="M2.4 21.4Q3 18.8 6 18.8T9.6 21.4Q6 24 2.4 21.4Z" fill="#77797c" />
      </Svg>
    )
  }
];

const Taskbar = () => (
  <footer className="grid h-12 shrink-0 grid-cols-[1fr_auto_1fr] items-center bg-[#eeeeee]">
    <span />
    <div className="flex h-full items-center pt-px pl-0.5">
      <button aria-label="Start" className="flex w-11 justify-center">
        <Svg size={24} box={24}>
          <defs>
            <linearGradient id="start" gradientUnits="userSpaceOnUse" x1="0" y1="0" x2="24" y2="24">
              <stop offset="0" stopColor="#4fc8f8" />
              <stop offset="1" stopColor="#0069c8" />
            </linearGradient>
          </defs>
          <path d="M0 0H11.5V11.5H0ZM12.5 0H24V11.5H12.5ZM0 12.5H11.5V24H0ZM12.5 12.5H24V24H12.5Z" fill="url(#start)" />
        </Svg>
      </button>
      <label className="mx-0.5 flex h-8 w-[220px] items-center rounded-full border border-[#dcdcdc] bg-[#fafafa] pl-2.5 text-[#1b1b1b]">
        <SearchIcon size={16} />
        <input
          type="text"
          aria-label="Search"
          placeholder="Search"
          className="ml-2.5 w-40 text-[13px] outline-none placeholder:text-[#5f5f5f]"
        />
      </label>
      {taskIcons.map(({ name, icon, active, running }) => (
        <button key={name} aria-label={name} className="relative flex h-full w-11 items-center justify-center">
          {active && <span className="absolute inset-x-0.5 inset-y-1 rounded-md border border-[#e4e4e4] bg-[#f9f9f9]" />}
          <span className="relative">{icon}</span>
          {active && <span className="absolute bottom-1 h-[3px] w-4 rounded-full bg-[#0078d4]" />}
          {running && <span className="absolute bottom-1 h-[3px] w-1.5 rounded-full bg-[#858585]" />}
        </button>
      ))}
    </div>
    <div className="flex items-center justify-end pr-[19px] text-[#1b1b1b]">
      <button aria-label="Show hidden icons">
        <Chevron dir="up" size={12} />
      </button>
      <button aria-label="Network and volume" className="ml-[18px] flex gap-2">
        <Svg>
          <path d="M10 1.6H2Q.8 1.6 .8 2.8V11.4Q.8 12.6 2 12.6H13V9M3.6 15.4H11.4M6 12.6V15.4M9.6 12.6V15.4" stroke="currentColor" strokeWidth="1.1" />
          <path d="M12 .8H15.6V5L14.8 6H12.8L12 5ZM13.8 6V15M12 2.8H15.6" stroke="currentColor" strokeWidth="1" />
        </Svg>
        <Svg size={17}>
          <path d="M.8 6V10H3L6.6 13.4V2.6L3 6ZM8.6 5.6Q10 8 8.6 10.4M10.8 4Q13 8 10.8 12M13 2.4Q16.4 8 13 13.6" stroke="currentColor" strokeWidth="1" />
        </Svg>
      </button>
      <div className="ml-4 text-right text-[11px] leading-4">
        <div>9:47 AM</div>
        <div>9/11/2026</div>
      </div>
    </div>
  </footer>
);

// Floating dictation pill, hovers over both windows
const VoiceBar = () => (
  <>
    <div className="absolute bottom-[98px] left-1/2 -ml-[52px] flex h-10 w-[104px] items-center bg-[#f3f3f3]">
      <span className="flex h-full w-6 items-center justify-center border-r border-[#dcdcdc] bg-[#ececec]">
        <span className="h-4 w-[3px] rounded-full bg-[#858585]" />
      </span>
      <button aria-label="Dictate" className="flex w-[42px] justify-center">
        <Svg>
          <rect x="5.4" y="0.8" width="5.2" height="9.6" rx="2.6" stroke="#222" strokeWidth="1.1" />
          <path d="M2.8 7.6Q3 12.6 8 12.6T13.2 7.6M8 12.6V15.6" stroke="#222" strokeWidth="1.1" />
        </Svg>
      </button>
      <button aria-label="More options" className="flex w-[34px] justify-center">
        <Svg size={12}>
          <path d="M1 8H4M6.5 8H9.5M12 8H15" stroke="#222" strokeWidth="2" />
        </Svg>
      </button>
    </div>
    <div className="absolute bottom-16 left-1/2 h-[7px] w-10 -translate-x-1/2 rounded-full bg-black/50" />
  </>
);

const App = () => (
  <div className="relative flex h-screen flex-col overflow-hidden bg-[#eeeeee] font-['Noto_Sans','Open_Sans',sans-serif]">
    <div className="flex min-h-0 flex-1">
      <LeftWindow />
      <RightWindow />
    </div>
    <Taskbar />
    <VoiceBar />
  </div>
);

export default App;
